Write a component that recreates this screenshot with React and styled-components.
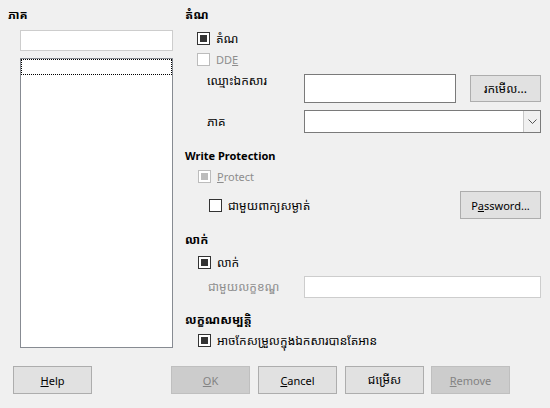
import React from "react";
import styled, { createGlobalStyle } from "styled-components";

const Global = createGlobalStyle`
  html, body { margin: 0; padding: 0; background: #f0f0f0; }
  body {
    font-family: "Noto Sans", "Noto Sans Khmer", "DejaVu Sans", sans-serif;
    font-size: 11px;
    color: #000;
  }
`;

const Dialog = styled.div`
  width: 550px;
  height: 408px;
  background: #f0f0f0;
  display: flex;
  flex-direction: column;
  box-sizing: border-box;
`;

const Main = styled.div`
  display: flex;
  height: 356px;
`;

const LeftCol = styled.div`
  width: 185px;
  padding-left: 8px;
  box-sizing: border-box;
  display: flex;
  flex-direction: column;
  flex: none;
`;

const RightCol = styled.div`
  flex: 1;
  padding-right: 9px;
  display: flex;
  flex-direction: column;
`;

const Km = styled.span`
  font-size: 12px;
  line-height: 14px;
`;

const Header = styled.div`
  height: 18px;
  margin-top: ${(p) => p.$mt || 0}px;
  display: flex;
  align-items: center;
  font-weight: 700;
  white-space: nowrap;
`;

const Row = styled.div`
  display: flex;
  align-items: center;
  height: ${(p) => p.$h || 18}px;
  margin-top: ${(p) => p.$mt || 0}px;
  padding-left: ${(p) => p.$indent || 0}px;
  white-space: nowrap;
`;

const Box = styled.span`
  width: 11px;
  height: 11px;
  border: 1px solid ${(p) => (p.$disabled ? "#bcbcbc" : "#333")};
  background: #fff;
  display: inline-flex;
  align-items: center;
  justify-content: center;
  flex: none;
  &::after {
    content: "";
    width: 7px;
    height: 7px;
    background: ${(p) => (p.$disabled ? "#bcbcbc" : "#333")};
    display: ${(p) => (p.$checked ? "block" : "none")};
  }
`;

const CheckLabel = styled.span`
  margin-left: 6px;
  color: ${(p) => (p.$disabled ? "#8d8d8d" : "#000")};
`;

const FieldLabel = styled.span`
  width: 119px;
  box-sizing: border-box;
  flex: none;
  padding-left: ${(p) => p.$pl || 22}px;
  color: ${(p) => (p.$disabled ? "#8d8d8d" : "#000")};
  line-height: 14px;
  align-self: ${(p) => (p.$top ? "flex-start" : "center")};
`;

const TextInput = styled.div`
  width: ${(p) => p.$w}px;
  height: ${(p) => p.$h}px;
  box-sizing: border-box;
  background: #fff;
  border: 1px solid ${(p) => p.$border || "#7a7a7a"};
  flex: none;
`;

const Combo = styled.div`
  width: 237px;
  height: 23px;
  box-sizing: border-box;
  background: #fff;
  border: 1px solid #7a7a7a;
  display: flex;
  justify-content: flex-end;
  flex: none;
`;

const ComboButton = styled.div`
  width: 16px;
  height: 100%;
  border-left: 1px solid #c8c8c8;
  background: #f0f0f0;
  display: flex;
  align-items: center;
  justify-content: center;
`;

const Button = styled.div`
  width: ${(p) => p.$w || 79}px;
  height: ${(p) => p.$h || 28}px;
  box-sizing: border-box;
  background: ${(p) => (p.$disabled ? "#cccccc" : "#e1e1e1")};
  border: 1px solid ${(p) => (p.$disabled ? "#bfbfbf" : "#adadad")};
  color: ${(p) => (p.$disabled ? "#838383" : "#000")};
  display: flex;
  align-items: center;
  justify-content: center;
  flex: none;
  margin-left: ${(p) => p.$ml || 0}px;
`;

const Spacer = styled.div`
  flex: 1;
`;

const ListBox = styled.div`
  margin-top: 7px;
  margin-left: 12px;
  width: 153px;
  height: 290px;
  box-sizing: border-box;
  background: #fff;
  border: 1px solid #878b92;
`;

const FocusRow = styled.div`
  height: 16px;
  border: 1px dotted #000;
  box-sizing: border-box;
`;

const Footer = styled.div`
  display: flex;
  padding: 10px 0 0 13px;
  height: 52px;
  box-sizing: border-box;
`;

const U = styled.span`
  text-decoration: underline;
`;

const Check = ({ checked, disabled, children }) => (
  <>
    <Box $checked={checked} $disabled={disabled} />
    <CheckLabel $disabled={disabled}>{children}</CheckLabel>
  </>
);

export default function App() {
  return (
    <>
      <Global />
      <Dialog>
        <Main>
          <LeftCol>
            <Header $mt={6}><Km>ភាគ</Km></Header>
            <Row $h={21} $mt={6} $indent={12}>
              <TextInput $w={153} $h={21} $border="#cdcdcd" />
            </Row>
            <ListBox>
              <FocusRow />
            </ListBox>
          </LeftCol>
          <RightCol>
            <Header $mt={6}><Km>តំណ</Km></Header>
            <Row $mt={5} $indent={12}>
              <Check checked><Km>តំណ</Km></Check>
            </Row>
            <Row $mt={3} $indent={12}>
              <Check disabled>
                DD<U>E</U>
              </Check>
            </Row>
            <Row $h={29} $mt={6}>
              <FieldLabel $top><Km>ឈ្មោះឯកសារ</Km></FieldLabel>
              <TextInput $w={152} $h={29} />
              <Button $w={71} $h={27} $ml={14}>
                <Km>រកមើល...</Km>
              </Button>
            </Row>
            <Row $h={23} $mt={7}>
              <FieldLabel><Km>ភាគ</Km></FieldLabel>
              <Combo>
                <ComboButton>
                  <svg width="9" height="5" viewBox="0 0 9 5">
                    <path d="M0.5 0.5 L4.5 4.5 L8.5 0.5" fill="none" stroke="#555" strokeWidth="1" />
                  </svg>
                </ComboButton>
              </Combo>
            </Row>
            <Header $mt={13}>Write Protection</Header>
            <Row $mt={3} $indent={13}>
              <Check checked disabled>
                <U>P</U>rotect
              </Check>
            </Row>
            <Row $h={28} $mt={6} $indent={24}>
              <Check><Km>ជាមួយពាក្យសម្ងាត់</Km></Check>
              <Spacer />
              <Button $w={81} $h={28}>
                P<U>a</U>ssword...
              </Button>
            </Row>
            <Header $mt={12}><Km>លាក់</Km></Header>
            <Row $mt={4} $indent={13}>
              <Check checked><Km>លាក់</Km></Check>
            </Row>
            <Row $h={22} $mt={5}>
              <FieldLabel $disabled $pl={23}><Km>ជាមួយលក្ខខណ្ឌ</Km></FieldLabel>
              <TextInput $w={237} $h={22} $border="#cdcdcd" />
            </Row>
            <Header $mt={13}><Km>លក្ខណសម្បត្តិ</Km></Header>
            <Row $mt={2} $indent={13}>
              <Check checked><Km>អាចកែសម្រួលក្នុងឯកសារបានតែអាន</Km></Check>
            </Row>
          </RightCol>
        </Main>
        <Footer>
          <Button>
            <U>H</U>elp
          </Button>
          <Button $disabled $ml={79}>
            <U>O</U>K
          </Button>
          <Button $ml={8}>
            <U>C</U>ancel
          </Button>
          <Button $ml={8}><Km>ជម្រើស</Km></Button>
          <Button $disabled $ml={7}>
            <U>R</U>emove
          </Button>
        </Footer>
      </Dialog>
    </>
  );
}
